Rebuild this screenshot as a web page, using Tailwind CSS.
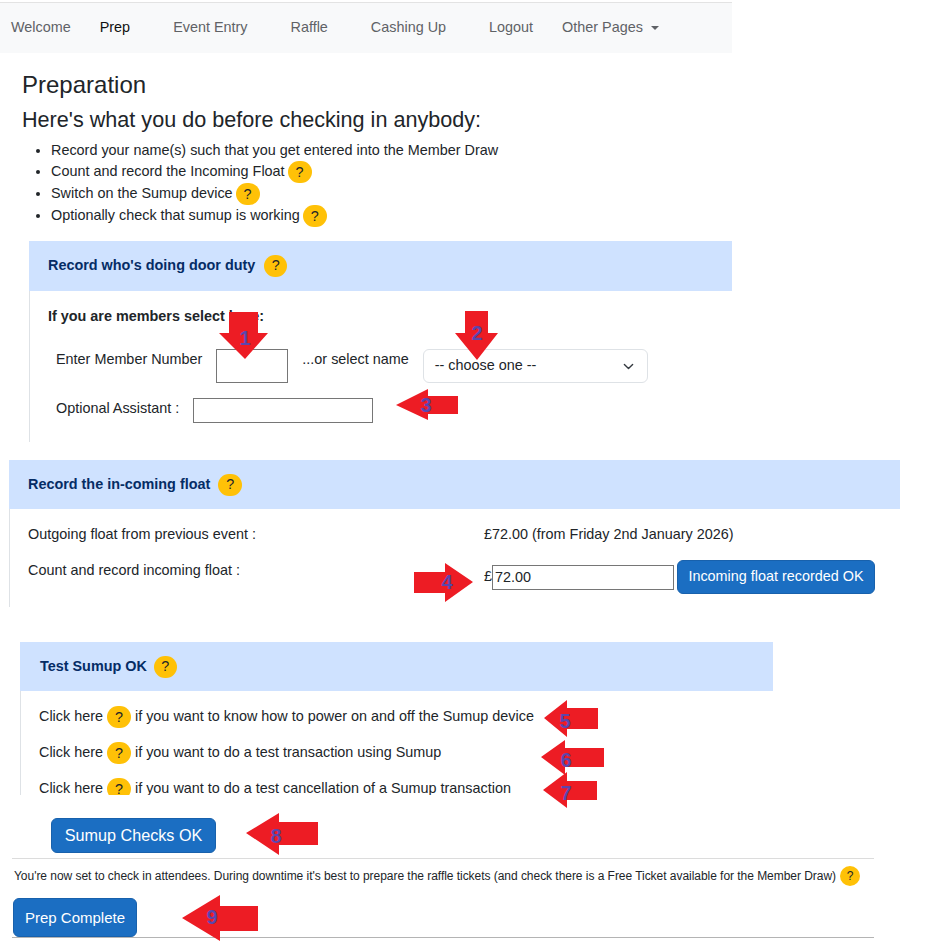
<!DOCTYPE html>
<html lang="en">
<head>
    <meta charset="utf-8" />
    <title>Preparation</title>
    <script src="https://cdn.jsdelivr.net/npm/@tailwindcss/browser@4"></script>
</head>
<body class="bg-white">
    <div class="relative w-[933px] h-[946px] overflow-hidden font-['Liberation_Sans',Arial,sans-serif] text-[14.4px] text-[#212529]">
        <!-- nav -->
        <nav class="mt-[2px] w-[732px] h-[51px] bg-[#f8f9fa] border-t border-[#e3e3e3] flex items-center text-[#5f6266]">
            <a class="ml-[11px]">Welcome</a>
            <a class="ml-[29px] text-[#111]">Prep</a>
            <a class="ml-[43px]">Event Entry</a>
            <a class="ml-[43px]">Raffle</a>
            <a class="ml-[43px]">Cashing Up</a>
            <a class="ml-[43px]">Logout</a>
            <a class="ml-[29px] flex items-center">Other Pages<span class="ml-[8px] w-0 h-0 border-x-[4px] border-x-transparent border-t-[4px] border-t-[#5f6266]"></span></a>
        </nav>

        <h1 class="ml-[22px] mt-[17px] text-[24px] leading-[29px]">Preparation</h1>
        <h2 class="ml-[22px] mt-[8px] text-[21.6px] leading-[26px]">Here's what you do before checking in anybody:</h2>
        <ul class="ml-[51px] mt-[6px] list-disc leading-[22px]">
            <li class="h-[21px]">Record your name(s) such that you get entered into the Member Draw</li>
            <li class="h-[22px]">Count and record the Incoming Float <span class="-ml-[1px] inline-flex items-center justify-center w-6 h-[22px] rounded-full bg-[#ffc107] align-middle">?</span></li>
            <li class="h-[22px]">Switch on the Sumup device <span class="-ml-[1px] inline-flex items-center justify-center w-6 h-[22px] rounded-full bg-[#ffc107] align-middle">?</span></li>
            <li class="h-[22px]">Optionally check that sumup is working <span class="-ml-[1px] inline-flex items-center justify-center w-6 h-[22px] rounded-full bg-[#ffc107] align-middle">?</span></li>
        </ul>

        <!-- door duty -->
        <section class="absolute left-[29px] top-[241px] w-[703px]">
            <div class="h-[50px] bg-[#cfe2ff] flex items-center pl-[19px] font-bold text-[#052c65]">Record who's doing door duty<span class="ml-[9px] inline-flex items-center justify-center w-[23px] h-[22px] rounded-full bg-[#ffc107] font-normal text-[#212529]">?</span></div>
            <div class="h-[151px] border-l border-[#dee2e6] pl-[18px] pt-[16px]">
                <p class="font-bold leading-[18px]">If you are members select here:</p>
                <div class="flex items-start mt-[24px] pl-[8px]">
                    <label class="mt-[1px] leading-[18px]">Enter Member Number</label>
                    <input class="ml-[14px] w-[72px] h-[34px] border border-[#767676]" />
                    <label class="ml-[14px] mt-[1px] leading-[18px]">...or select name</label>
                    <div class="ml-[14px] w-[225px] h-[34px] border border-[#dee2e6] rounded-[6px] flex items-center justify-between pl-[11px] pr-[13px]">
                        <span>-- choose one --</span>
                        <svg width="11" height="11" viewBox="0 0 16 16" fill="none" stroke="#343a40" stroke-width="2" stroke-linecap="round" stroke-linejoin="round"><path d="m2 5 6 6 6-6" /></svg>
                    </div>
                </div>
                <div class="flex items-center mt-[15px] pl-[8px]">
                    <label class="leading-[18px] -mt-[5px]">Optional Assistant :</label>
                    <input class="ml-[14px] w-[180px] h-[25px] border border-[#767676]" />
                </div>
            </div>
        </section>

        <!-- float -->
        <section class="absolute left-[9px] top-[460px] w-[891px]">
            <div class="h-[49px] bg-[#cfe2ff] flex items-center pl-[19px] font-bold text-[#052c65]">Record the in-coming float<span class="ml-[8px] inline-flex items-center justify-center w-6 h-[22px] rounded-full bg-[#ffc107] font-normal text-[#212529]">?</span></div>
            <div class="h-[98px] border-l border-[#dee2e6] pl-[18px] pt-[16px]">
                <div class="flex leading-[18px]">
                    <span class="w-[456px]">Outgoing float from previous event :</span>
                    <span>£72.00 (from Friday 2nd January 2026)</span>
                </div>
                <div class="flex items-start mt-[17px]">
                    <span class="w-[456px] mt-[1px] leading-[18px]">Count and record incoming float :</span>
                    <div class="flex items-center">
                        <span>£</span>
                        <input value="72.00" class="w-[182px] h-[25px] border border-[#767676] pl-[2px]" />
                        <button class="ml-[3px] w-[198px] h-[34px] bg-[#1b6ec2] border border-[#1861ac] rounded-[6px] text-white">Incoming float recorded OK</button>
                    </div>
                </div>
            </div>
        </section>

        <!-- sumup -->
        <section class="absolute left-[20px] top-[642px] w-[753px]">
            <div class="h-[49px] bg-[#cfe2ff] flex items-center pl-[20px] font-bold text-[#052c65]">Test Sumup OK<span class="ml-[7px] inline-flex items-center justify-center w-[23px] h-[22px] rounded-full bg-[#ffc107] font-normal text-[#212529]">?</span></div>
            <div class="h-[104px] overflow-hidden border-l border-[#dee2e6] pl-[18px] pt-[14px]">
                <p class="h-[36px] leading-[22px]">Click here <span class="inline-flex items-center justify-center w-6 h-[22px] rounded-full bg-[#ffc107] align-middle">?</span> if you want to know how to power on and off the Sumup device</p>
                <p class="h-[36px] leading-[22px]">Click here <span class="inline-flex items-center justify-center w-6 h-[22px] rounded-full bg-[#ffc107] align-middle">?</span> if you want to do a test transaction using Sumup</p>
                <p class="h-[36px] leading-[22px]">Click here <span class="inline-flex items-center justify-center w-6 h-[22px] rounded-full bg-[#ffc107] align-middle">?</span> if you want to do a test cancellation of a Sumup transaction</p>
            </div>
        </section>

        <!-- footer part -->
        <section class="absolute left-0 top-[818px] w-[874px]">
            <button class="ml-[51px] w-[165px] h-[35px] bg-[#1b6ec2] border border-[#1861ac] rounded-[6px] text-white text-[16.2px]">Sumup Checks OK</button>
            <div class="ml-[12px] mt-[5px] border-t border-[#dcdcdc]"></div>
            <p class="ml-[14px] mt-[6px] h-[22px] flex items-center text-[12px] tracking-[-0.04px] whitespace-nowrap">You're now set to check in attendees. During downtime it's best to prepare the raffle tickets (and check there is a Free Ticket available for the Member Draw)<span class="ml-[4px] inline-flex items-center justify-center w-[20px] h-[20px] rounded-full bg-[#ffc107]">?</span></p>
            <button class="ml-[13px] mt-[11px] block w-[124px] h-[39px] pt-[1px] bg-[#1b6ec2] border border-[#1861ac] rounded-[6px] text-white text-[15px]">Prep Complete</button>
            <div class="ml-[12px] border-t border-[#b4b4b4]"></div>
        </section>

        <!-- numbered red arrows pasted over the page -->
        <svg class="absolute left-0 top-0" width="933" height="946" font-family="Liberation Sans, sans-serif" font-size="20" font-weight="700" fill="#5b46ad" text-anchor="middle">
            <g fill="#ed1c24">
                <polygon points="229,312 258,312 258,333 268,333 245,359 219,333 229,333" />
                <polygon points="465,311 488,311 488,333 498,333 477,360 455,333 465,333" />
                <polygon points="396,405 428,389 428,396 458,396 458,414 428,414 428,420" />
                <polygon points="414,572 445,572 445,563 473,582 445,602 445,593 414,593" />
                <polygon points="544,718 567,700 567,708 598,708 598,729 567,729 567,737" />
                <polygon points="541,757 565,740 565,748 604,748 604,767 565,767 565,775" />
                <polygon points="543,790 567,772 567,781 597,781 597,800 567,800 567,808" />
                <polygon points="246,833 279,813 279,822 318,822 318,845 279,845 279,855" />
                <polygon points="182,918 220,895 220,906 258,906 258,931 220,931 220,941" />
            </g>
            <text x="245" y="345">1</text>
            <text x="477" y="340">2</text>
            <text x="426" y="412">3</text>
            <text x="447" y="589">4</text>
            <text x="565" y="728">5</text>
            <text x="566" y="767">6</text>
            <text x="566" y="800">7</text>
            <text x="276" y="843">8</text>
            <text x="212" y="924">9</text>
        </svg>
    </div>
</body>
</html>
